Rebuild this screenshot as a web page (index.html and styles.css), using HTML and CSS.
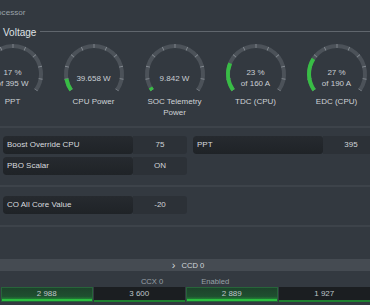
FILE: index.html
```html
<!DOCTYPE html>
<html lang="en">
<head>
    <meta charset="UTF-8">
    <meta name="viewport" content="width=device-width, initial-scale=1.0">
    <title>Processor - Voltage</title>
    <link rel="stylesheet" href="styles.css">
</head>
<body>
    <div class="window">
        <div class="crumb">Processor</div>

        <div class="section-head">
            <span>Voltage</span>
            <i class="rule"></i>
        </div>

        <div class="gauges">
            <div class="gauge">
                <div class="dial">
                    <svg width="66" height="52" viewBox="0 0 66 52">
                        <path class="track" pathLength="100" d="M10.06 47.06 A28 28 0 1 1 55.94 47.06"/>
                        <path class="ticks" pathLength="100" d="M10.06 47.06 A28 28 0 1 1 55.94 47.06"/>
                        <path class="fill" pathLength="100" stroke-dasharray="17 100" d="M10.06 47.06 A28 28 0 1 1 55.94 47.06"/>
                    </svg>
                    <div class="readout"><span>17 %</span><span>of 395 W</span></div>
                </div>
                <div class="gauge-name">PPT</div>
            </div>
            <div class="gauge">
                <div class="dial">
                    <svg width="66" height="52" viewBox="0 0 66 52">
                        <path class="track" pathLength="100" d="M10.06 47.06 A28 28 0 1 1 55.94 47.06"/>
                        <path class="ticks" pathLength="100" d="M10.06 47.06 A28 28 0 1 1 55.94 47.06"/>
                        <path class="fill" pathLength="100" stroke-dasharray="10 100" d="M10.06 47.06 A28 28 0 1 1 55.94 47.06"/>
                    </svg>
                    <div class="readout"><span>39.658 W</span></div>
                </div>
                <div class="gauge-name">CPU Power</div>
            </div>
            <div class="gauge">
                <div class="dial">
                    <svg width="66" height="52" viewBox="0 0 66 52">
                        <path class="track" pathLength="100" d="M10.06 47.06 A28 28 0 1 1 55.94 47.06"/>
                        <path class="ticks" pathLength="100" d="M10.06 47.06 A28 28 0 1 1 55.94 47.06"/>
                        <path class="fill" pathLength="100" stroke-dasharray="2.5 100" d="M10.06 47.06 A28 28 0 1 1 55.94 47.06"/>
                    </svg>
                    <div class="readout"><span>9.842 W</span></div>
                </div>
                <div class="gauge-name">SOC Telemetry<br>Power</div>
            </div>
            <div class="gauge">
                <div class="dial">
                    <svg width="66" height="52" viewBox="0 0 66 52">
                        <path class="track" pathLength="100" d="M10.06 47.06 A28 28 0 1 1 55.94 47.06"/>
                        <path class="ticks" pathLength="100" d="M10.06 47.06 A28 28 0 1 1 55.94 47.06"/>
                        <path class="fill" pathLength="100" stroke-dasharray="23 100" d="M10.06 47.06 A28 28 0 1 1 55.94 47.06"/>
                    </svg>
                    <div class="readout"><span>23 %</span><span>of 160 A</span></div>
                </div>
                <div class="gauge-name">TDC (CPU)</div>
            </div>
            <div class="gauge">
                <div class="dial">
                    <svg width="66" height="52" viewBox="0 0 66 52">
                        <path class="track" pathLength="100" d="M10.06 47.06 A28 28 0 1 1 55.94 47.06"/>
                        <path class="ticks" pathLength="100" d="M10.06 47.06 A28 28 0 1 1 55.94 47.06"/>
                        <path class="fill" pathLength="100" stroke-dasharray="27 100" d="M10.06 47.06 A28 28 0 1 1 55.94 47.06"/>
                    </svg>
                    <div class="readout"><span>27 %</span><span>of 190 A</span></div>
                </div>
                <div class="gauge-name">EDC (CPU)</div>
            </div>
        </div>

        <div class="divider"></div>

        <div class="settings">
            <div class="setting">
                <div class="setting-label">Boost Override CPU</div>
                <div class="setting-value">75</div>
            </div>
            <div class="setting">
                <div class="setting-label">PPT</div>
                <div class="setting-value">395</div>
            </div>
            <div class="setting">
                <div class="setting-label">PBO Scalar</div>
                <div class="setting-value">ON</div>
            </div>
        </div>

        <div class="divider mid"></div>

        <div class="settings single">
            <div class="setting">
                <div class="setting-label">CO All Core Value</div>
                <div class="setting-value">-20</div>
            </div>
        </div>

        <div class="divider low"></div>

        <div class="ccd-bar"><span class="chevron">›</span> CCD 0</div>

        <div class="ccx-head">
            <span>CCX 0</span>
            <span>Enabled</span>
        </div>

        <div class="cores">
            <div class="core active">2 988</div>
            <div class="core">3 600</div>
            <div class="core active">2 889</div>
            <div class="core">1 927</div>
        </div>
    </div>
</body>
</html>
```

FILE: styles.css
```css
:root {
    --bg: #333940;
    --track: #4c5259;
    --tick: #858b92;
    --green: #38bd45;
    --text: #d2d6da;
    --text-dim: #9aa1a8;
    --cell-mid: #2c3137;
}
* {
    box-sizing: border-box;
    margin: 0;
    padding: 0;
}
body {
    font-family: 'Liberation Sans', Arial, sans-serif;
    background: var(--bg);
    color: var(--text);
    overflow: hidden;
}
.window {
    width: 370px;
    height: 305px;
    overflow: hidden;
}
.crumb {
    padding-top: 7px;
    margin-left: -11px;
    font-size: 8.1px;
    line-height: 12px;
    color: var(--text-dim);
}
/* section header with rule */
.section-head {
    display: flex;
    align-items: center;
    margin-top: 6px;
    padding-left: 3px;
    height: 14px;
    font-size: 10px;
    color: #dfe2e5;
}
.section-head .rule {
    flex: 1;
    height: 1px;
    margin-left: 4px;
    margin-top: -1px;
    background: #60666d;
}
/* Gauges */
.gauges {
    display: flex;
    margin-top: 4px;
    margin-left: -28px;
}
.gauge {
    flex: 0 0 81px;
    text-align: center;
}
.dial {
    position: relative;
    width: 66px;
    height: 52px;
    margin: 0 auto;
}
.dial svg {
    display: block;
}
.dial path {
    fill: none;
    stroke-width: 4;
}
.dial .track {
    stroke: var(--track);
}
.dial .ticks {
    stroke: var(--tick);
    stroke-dasharray: 0.7 9.3;
    stroke-dashoffset: 0.35;
}
.dial .fill {
    stroke: var(--green);
}
.readout {
    position: absolute;
    left: 0;
    right: 0;
    top: 24px;
    height: 22px;
    display: flex;
    flex-direction: column;
    justify-content: center;
    font-size: 8px;
    line-height: 11px;
    color: #c9ced3;
}
.gauge-name {
    margin-top: 2px;
    font-size: 8px;
    line-height: 10.5px;
    color: #cfd3d7;
}
.divider {
    height: 2px;
    margin-top: 8px;
    background: #3d434a;
}
.divider.mid {
    margin-top: 10px;
}
.divider.low {
    margin-top: 11px;
}
/* Settings rows */
.settings {
    display: grid;
    grid-template-columns: 184px 186px;
    column-gap: 6px;
    row-gap: 3px;
    margin-top: 8px;
    padding-left: 3px;
}
.settings.single {
    margin-top: 9px;
}
.setting {
    display: flex;
    height: 18px;
    border-radius: 3px;
    overflow: hidden;
    font-size: 8px;
    line-height: 18px;
}
.setting-label {
    width: 130px;
    padding-left: 4px;
    background: linear-gradient(180deg, #262a2f, #1f2327);
    border-radius: 3px;
    color: #d8dbdf;
}
.setting-value {
    flex: 1;
    text-align: center;
    background: var(--cell-mid);
    color: #d0d4d8;
}
/* CCD section */
.ccd-bar {
    margin-top: 32px;
    height: 12px;
    line-height: 12px;
    padding-left: 6px;
    background: #454b52;
    text-align: center;
    font-size: 7.6px;
    color: #d4d8dc;
}
.ccd-bar .chevron {
    margin-right: 4px;
    font-size: 11px;
    vertical-align: -1px;
}
.ccx-head {
    display: flex;
    justify-content: center;
    gap: 38px;
    margin-top: 6px;
    line-height: 10px;
    font-size: 7.6px;
    color: var(--text-dim);
}
.cores {
    display: grid;
    grid-template-columns: repeat(4, 1fr);
    gap: 1px;
    padding-left: 1px;
}
.core {
    height: 15px;
    line-height: 14px;
    text-align: center;
    font-size: 8px;
    color: #bfc5ca;
    background: #1b1e21;
    box-shadow: inset 0 -2px 0 #1f7f31;
}
.core.active {
    background: linear-gradient(180deg, #1d432b 0%, #1f5030 65%, #25a13a 100%);
    border: 1px solid #27643a;
    line-height: 12px;
    box-shadow: inset 0 -2px 0 #2bbf40;
}
```
